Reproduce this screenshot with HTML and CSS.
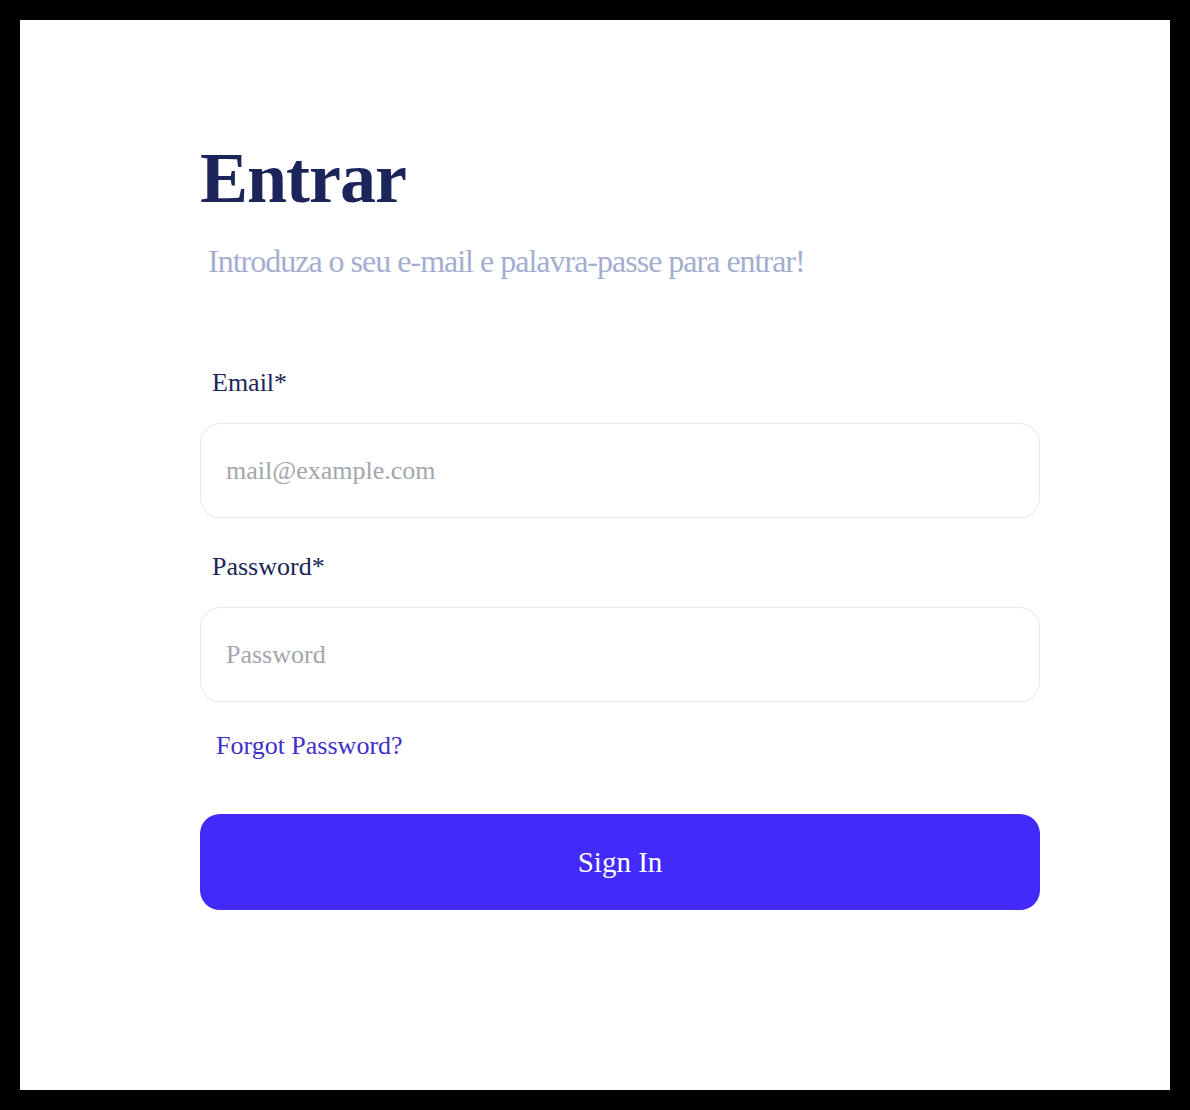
FILE: index.html
```html
<!DOCTYPE html>
<html lang="pt">
<head>
<meta charset="utf-8">
<title>Entrar</title>
<link rel="stylesheet" href="styles.css">
</head>
<body>
<main class="card">
  <form class="signin">
    <h1 class="title">Entrar</h1>
    <p class="subtitle">Introduza o seu e-mail e palavra-passe para entrar!</p>
    <label class="label label-email" for="email">Email*</label>
    <input class="field" id="email" type="email" placeholder="mail@example.com">
    <label class="label label-password" for="password">Password*</label>
    <input class="field" id="password" type="password" placeholder="Password">
    <a class="forgot" href="#">Forgot Password?</a>
    <button class="submit" type="button">Sign In</button>
  </form>
</main>
</body>
</html>
```

FILE: styles.css
```css
html, body {
  margin: 0;
  padding: 0;
  background: #000;
}

body {
  padding: 20px;
  font-family: "Liberation Serif", "Times New Roman", serif;
}

.card {
  background: #fff;
  height: 1070px;
  box-sizing: border-box;
  padding: 122px 130px 0 180px;
}

.signin {
  width: 840px;
  display: flex;
  flex-direction: column;
  align-items: flex-start;
}

.title {
  margin: 0;
  font-size: 72px;
  line-height: 72px;
  font-weight: 700;
  letter-spacing: -1px;
  color: #1b2559;
}

.subtitle {
  margin: 31px 0 0 8px;
  font-size: 32px;
  line-height: 32px;
  letter-spacing: -1px;
  color: #a3aed0;
}

.label {
  margin-left: 12px;
  font-size: 26px;
  line-height: 26px;
  color: #1b2559;
}

.label-email {
  margin-top: 93px;
}

.label-password {
  margin-top: 36px;
}

.field {
  box-sizing: border-box;
  width: 840px;
  height: 95px;
  margin-top: 27px;
  padding: 0 25px;
  border: 1.5px solid #e6e8ed;
  border-radius: 20px;
  background: #fff;
  font-family: "Liberation Serif", "Times New Roman", serif;
  font-size: 26px;
  color: #1b2559;
  outline: none;
}

.field::placeholder {
  color: #a3a6ad;
}

.forgot {
  margin: 31px 0 0 16px;
  font-size: 26px;
  line-height: 26px;
  color: #3f30c8;
  text-decoration: none;
}

.submit {
  margin-top: 55px;
  width: 840px;
  height: 96px;
  border: none;
  border-radius: 20px;
  background: #422afb;
  color: #fff;
  font-family: "Liberation Serif", "Times New Roman", serif;
  font-size: 29px;
  cursor: pointer;
}
```
